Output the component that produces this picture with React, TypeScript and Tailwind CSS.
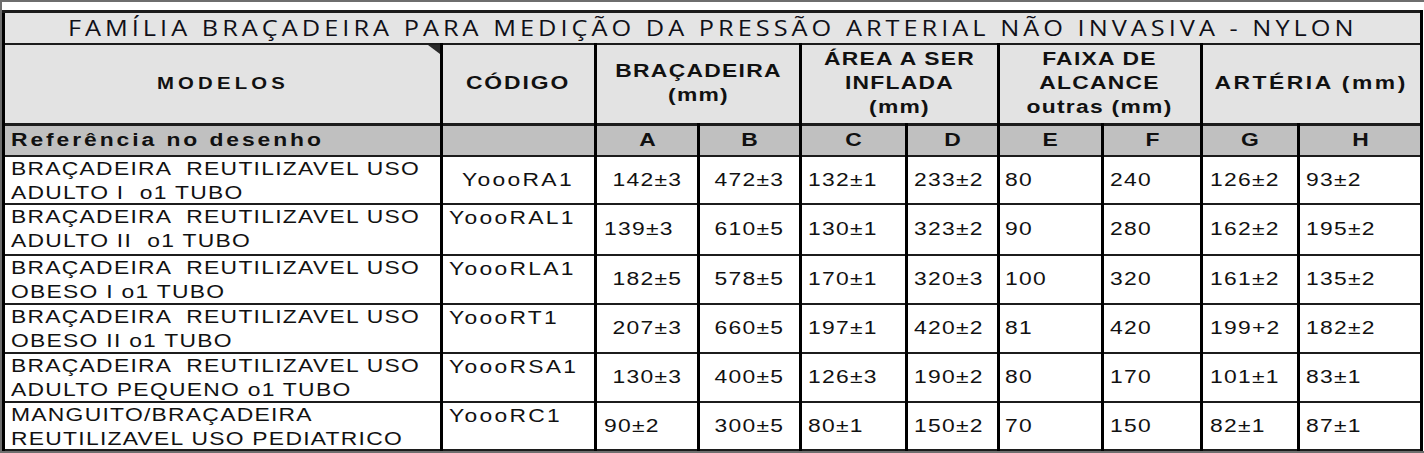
import React from "react"

const sans = "font-['Liberation_Sans',Arial,sans-serif]"
const cell = "p-0 border-x-[3px] border-y-2 border-x-black border-y-[#1c1c1c]"

type Row = {
  model: [string, string]
  code: string
  codeCentered?: boolean
  h: string
  aLeft?: boolean
  vals: string[]
}

const rows: Row[] = [
  {
    model: ["BRAÇADEIRA  REUTILIZAVEL USO", "ADULTO I  o1 TUBO"],
    code: "YoooRA1",
    codeCentered: true,
    h: "h-[48px]",
    vals: ["142±3", "472±3", "132±1", "233±2", "80", "240", "126±2", "93±2"],
  },
  {
    model: ["BRAÇADEIRA  REUTILIZAVEL USO", "ADULTO II  o1 TUBO"],
    code: "YoooRAL1",
    h: "h-[51px]",
    aLeft: true,
    vals: ["139±3", "610±5", "130±1", "323±2", "90", "280", "162±2", "195±2"],
  },
  {
    model: ["BRAÇADEIRA  REUTILIZAVEL USO", "OBESO I o1 TUBO"],
    code: "YoooRLA1",
    h: "h-[49px]",
    vals: ["182±5", "578±5", "170±1", "320±3", "100", "320", "161±2", "135±2"],
  },
  {
    model: ["BRAÇADEIRA  REUTILIZAVEL USO", "OBESO II o1 TUBO"],
    code: "YoooRT1",
    h: "h-[49px]",
    vals: ["207±3", "660±5", "197±1", "420±2", "81", "420", "199+2", "182±2"],
  },
  {
    model: ["BRAÇADEIRA  REUTILIZAVEL USO", "ADULTO PEQUENO o1 TUBO"],
    code: "YoooRSA1",
    h: "h-[49px]",
    vals: ["130±3", "400±5", "126±3", "190±2", "80", "170", "101±1", "83±1"],
  },
  {
    model: ["MANGUITO/BRAÇADEIRA", "REUTILIZAVEL USO PEDIATRICO"],
    code: "YoooRC1",
    h: "h-[48px]",
    aLeft: true,
    vals: ["90±2", "300±5", "80±1", "150±2", "70", "150", "82±1", "87±1"],
  },
]

// left padding of the plain left-aligned columns C..H
const pads = ["pl-[6px]", "pl-[6px]", "pl-[5px]", "pl-[6px]", "pl-[7px]", "pl-[6px]"]

// the source sheet is a pasted picture, horizontally stretched: keep that look
function Wide({ children, left, className = "" }: { children: React.ReactNode; left?: boolean; className?: string }) {
  return (
    <span className={`inline-block scale-x-[1.27] ${left ? "origin-left" : "origin-center"} ${className}`}>
      {children}
    </span>
  )
}

function HeadCell({ children, span = 1, track = "tracking-[1px]" }: { children: React.ReactNode; span?: number; track?: string }) {
  return (
    <td colSpan={span} className={`${cell} bg-[#e3e3e3] text-center align-middle`}>
      <Wide className={`text-[18px] font-bold leading-[24px] ${track} whitespace-nowrap`}>{children}</Wide>
    </td>
  )
}

export default function App() {
  return (
    <div className={`w-[1424px] h-[453px] overflow-hidden bg-white border-t-2 border-l-2 border-b-2 border-[#6e6e6e] pt-[8px] ${sans}`}>
      <table className="table-fixed border-collapse w-[1418px] text-[#111]">
        <colgroup>
          <col className="w-[438px]" />
          <col className="w-[154px]" />
          <col className="w-[103px]" />
          <col className="w-[102px]" />
          <col className="w-[106px]" />
          <col className="w-[92px]" />
          <col className="w-[104px]" />
          <col className="w-[99px]" />
          <col className="w-[97px]" />
          <col className="w-[123px]" />
        </colgroup>
        <tbody>
          <tr className="h-[32px]">
            <td colSpan={10} className={`${cell} border-t-[3px] bg-[#e4e4e4] text-center align-middle`}>
              <span className="inline-block scale-x-[1.15] origin-center font-['Open_Sans',sans-serif] text-[22px] leading-[28px] tracking-[3.5px] text-[#101018] whitespace-nowrap">
                FAMÍLIA BRAÇADEIRA PARA MEDIÇÃO DA PRESSÃO ARTERIAL NÃO INVASIVA - NYLON
              </span>
            </td>
          </tr>
          <tr className="h-[80px]">
            <td className={`${cell} relative bg-[#e3e3e3] text-center align-middle`}>
              <Wide className="text-[16px] font-bold tracking-[3.3px]">MODELOS</Wide>
              <div className="absolute top-0 right-0 w-0 h-0 border-t-[9px] border-l-[12px] border-t-[#2a2a2a] border-l-transparent" />
            </td>
            <HeadCell track="tracking-[1.5px]">CÓDIGO</HeadCell>
            <HeadCell span={2}>
              BRAÇADEIRA
              <br />
              (mm)
            </HeadCell>
            <HeadCell span={2}>
              ÁREA A SER
              <br />
              INFLADA
              <br />
              (mm)
            </HeadCell>
            <HeadCell span={2}>
              FAIXA DE
              <br />
              ALCANCE
              <br />
              outras (mm)
            </HeadCell>
            <HeadCell span={2} track="tracking-[2px]">ARTÉRIA (mm)</HeadCell>
          </tr>
          <tr className="h-[32px] bg-[#c0c0c0]">
            <td className={`${cell} border-t-[3px] text-left align-middle`}>
              <div className="pl-[6px]">
                <Wide left className="text-[18px] font-bold tracking-[2.3px] whitespace-nowrap">Referência no desenho</Wide>
              </div>
            </td>
            <td className={`${cell} border-t-[3px]`} />
            {["A", "B", "C", "D", "E", "F", "G", "H"].map((l) => (
              <td key={l} className={`${cell} border-t-[3px] text-center align-middle`}>
                <Wide className="text-[18px] font-bold">{l}</Wide>
              </td>
            ))}
          </tr>
          {rows.map((r, i) => (
            <tr key={i} className={`${r.h} bg-white`}>
              <td className={`${cell} align-top`}>
                <div className="h-[40px] pl-[6px]">
                  <Wide left className="text-[18px] leading-[24px] tracking-[1px] whitespace-pre">
                    {r.model[0]}
                    <br />
                    {r.model[1]}
                  </Wide>
                </div>
              </td>
              <td className={`${cell} ${r.codeCentered ? "align-middle text-center" : "align-top text-left"}`}>
                <div className={r.codeCentered ? "" : "h-[24px] pl-[6px] pt-[1px]"}>
                  <Wide left={!r.codeCentered} className="text-[18px] leading-[24px] tracking-[1.8px]">
                    {r.code}
                  </Wide>
                </div>
              </td>
              <td className={`${cell} align-middle ${r.aLeft ? "text-left pl-[7px]" : "text-center"}`}>
                <Wide left={r.aLeft} className="text-[18px] tracking-[1px]">{r.vals[0]}</Wide>
              </td>
              <td className={`${cell} align-middle text-center`}>
                <Wide className="text-[18px] tracking-[1px]">{r.vals[1]}</Wide>
              </td>
              {r.vals.slice(2).map((v, j) => (
                <td key={j} className={`${cell} align-middle text-left ${pads[j]}`}>
                  <Wide left className="text-[18px] tracking-[1px]">{v}</Wide>
                </td>
              ))}
            </tr>
          ))}
        </tbody>
      </table>
    </div>
  )
}
